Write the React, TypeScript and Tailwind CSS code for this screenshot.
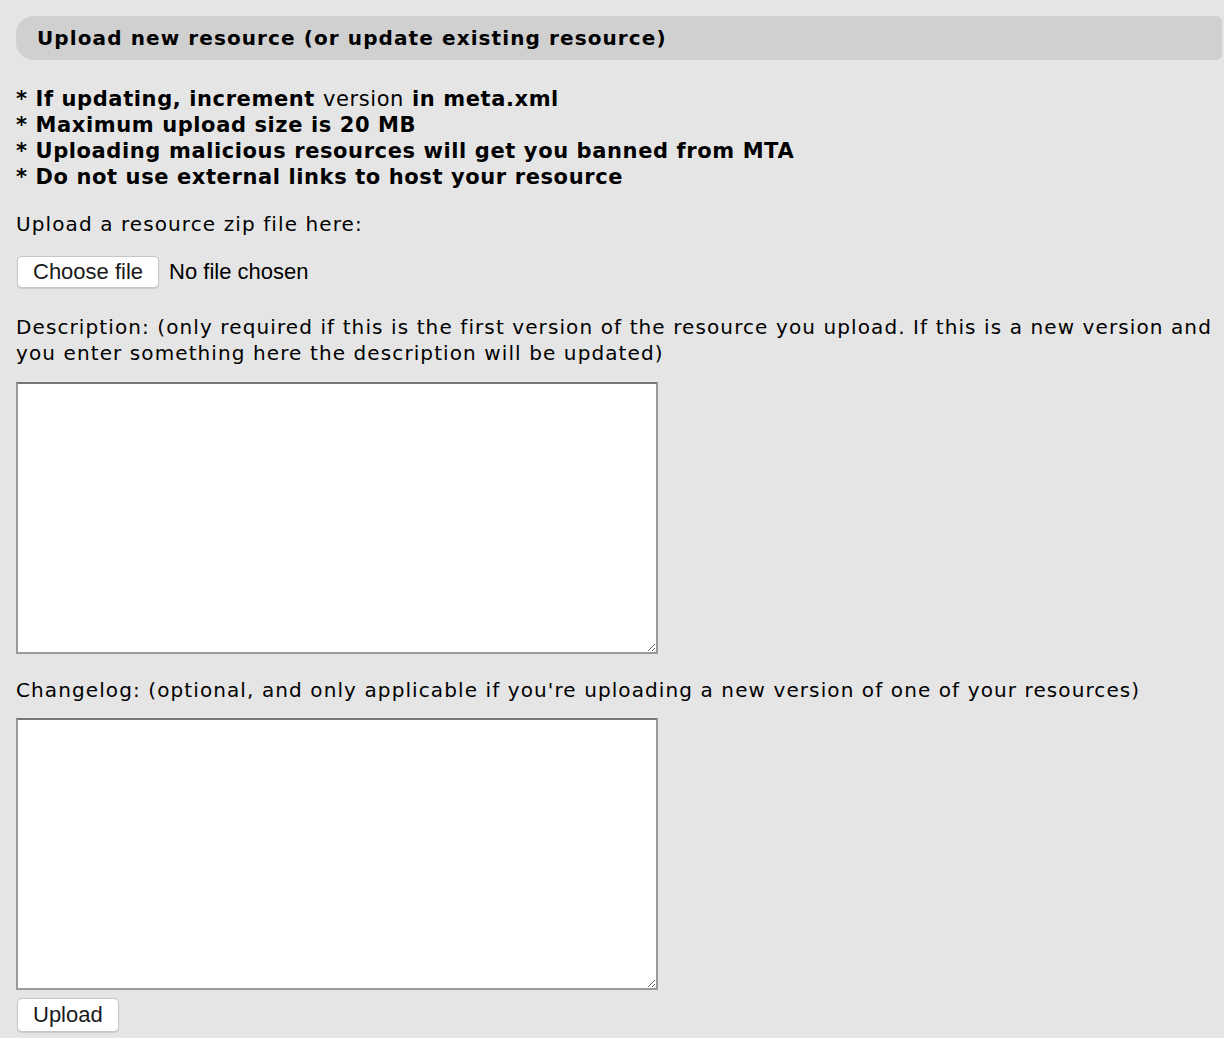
// Upload form for a resource: notes, file picker, description and changelog fields.
const BULLETS = [
  <>
    * If updating, increment <span className="font-normal">version</span> in meta.xml
  </>,
  <>* Maximum upload size is 20 MB</>,
  <>* Uploading malicious resources will get you banned from MTA</>,
  <>* Do not use external links to host your resource</>,
];

function PlainButton({ children, tall }: { children: React.ReactNode; tall?: boolean }) {
  return (
    <button
      type="button"
      className={`${tall ? 'h-[34px]' : 'h-[32px]'} rounded-[5px] border border-[#c6c6c6] bg-white px-[15px] text-[22px] leading-none text-[#1a1a1a] shadow-[0_1px_1px_rgba(0,0,0,0.12)] [font-family:'Liberation_Sans',Arial,sans-serif]`}
    >
      {children}
    </button>
  );
}

function Field() {
  return <textarea className="block h-[272px] w-[642px] resize border-2 border-[#999999] border-t-[#777777] bg-white" />;
}

export default function App() {
  return (
    <div className="min-h-[1038px] bg-[#e5e5e5] pt-4 pl-4 text-black [font-family:'DejaVu_Sans',Verdana,sans-serif]">
      <div className="mr-[2px] flex h-[44px] items-center rounded-l-[18px] rounded-r-[6px] bg-[#d0d0d0] pl-[21px]">
        <h2 className="text-[20px] font-bold tracking-[1.1px]">Upload new resource (or update existing resource)</h2>
      </div>

      <ul className="mt-[26px] text-[21px] font-bold leading-[26px] tracking-[0.6px]">
        {BULLETS.map((b, i) => (
          <li key={i}>{b}</li>
        ))}
      </ul>

      <p className="mt-[21px] text-[20px] leading-[26px] tracking-[1.1px]">Upload a resource zip file here:</p>

      <div className="mt-[18px] flex items-center gap-[10px] pl-px">
        <PlainButton>Choose file</PlainButton>
        <span className="text-[22px] [font-family:'Liberation_Sans',Arial,sans-serif]">No file chosen</span>
      </div>

      <p className="mt-[26px] text-[20px] leading-[26px] tracking-[1.1px]">
        Description: (only required if this is the first version of the resource you upload. If this is a new version and
        <br />
        you enter something here the description will be updated)
      </p>
      <div className="mt-[16px]">
        <Field />
      </div>

      <p className="mt-[23px] text-[20px] leading-[26px] tracking-[1.1px]">
        Changelog: (optional, and only applicable if you're uploading a new version of one of your resources)
      </p>
      <div className="mt-[15px]">
        <Field />
      </div>

      <div className="mt-[8px] pl-px">
        <PlainButton tall>Upload</PlainButton>
      </div>
    </div>
  );
}
